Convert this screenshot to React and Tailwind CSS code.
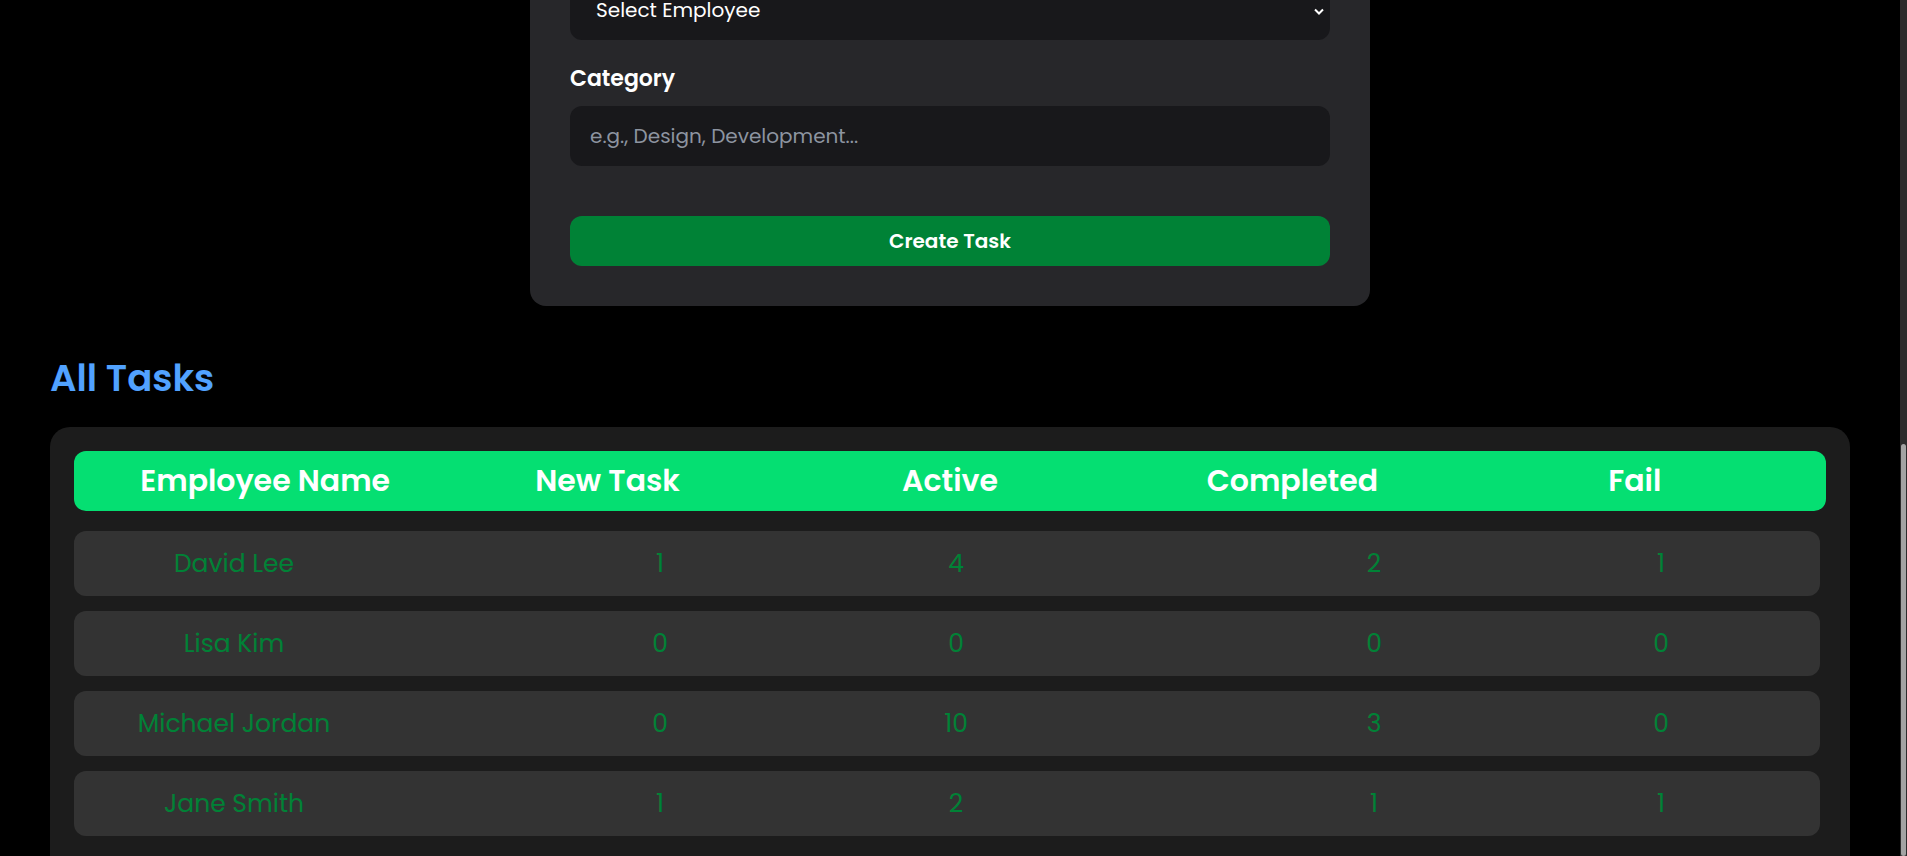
import { useState } from "react";

const employees = [
  { name: "David Lee", newTask: 1, active: 4, completed: 2, failed: 1 },
  { name: "Lisa Kim", newTask: 0, active: 0, completed: 0, failed: 0 },
  { name: "Michael Jordan", newTask: 0, active: 10, completed: 3, failed: 0 },
  { name: "Jane Smith", newTask: 1, active: 2, completed: 1, failed: 1 },
];

const headers = ["Employee Name", "New Task", "Active", "Completed", "Fail"];

const CreateTask = () => {
  const [assignTo, setAssignTo] = useState("");
  const [category, setCategory] = useState("");

  const submitHandler = (e) => {
    e.preventDefault();
    setCategory("");
  };

  return (
    <form
      onSubmit={submitHandler}
      className="mx-auto -mt-[60px] w-[840px] rounded-2xl bg-[#27272a] p-10"
    >
      <div className="relative">
        <select
          value={assignTo}
          onChange={(e) => setAssignTo(e.target.value)}
          className="h-[60px] w-full appearance-none rounded-xl bg-[#18181b] pl-[26px] pr-10 text-xl text-white outline-none"
        >
          <option value="">Select Employee</option>
          {employees.map((emp) => (
            <option key={emp.name} value={emp.name}>
              {emp.name}
            </option>
          ))}
        </select>
        {/* native arrow replaced so it sits where the browser drew it */}
        <svg
          className="pointer-events-none absolute right-[6px] top-[28px] h-[7px] w-[10px]"
          viewBox="0 0 10 7"
          fill="none"
          stroke="white"
          strokeWidth="2"
        >
          <path d="M1 1.5l4 4 4-4" />
        </svg>
      </div>

      <label className="mt-[25px] mb-[13px] block text-[22px] leading-7 font-semibold text-white">
        Category
      </label>
      <input
        value={category}
        onChange={(e) => setCategory(e.target.value)}
        type="text"
        placeholder="e.g., Design, Development..."
        className="h-[60px] w-full rounded-xl bg-[#18181b] px-5 text-xl text-white outline-none placeholder:text-[#8d94a0]"
      />

      <button className="mt-[50px] h-[50px] w-full rounded-xl bg-green-700 text-xl font-semibold text-white">
        Create Task
      </button>
    </form>
  );
};

// row cells don't line up with the header grid, so each column keeps its own offset
const rowCols = [
  "ml-[40px] w-[240px]",
  "ml-[246px] w-[120px]",
  "ml-[176px] w-[120px]",
  "ml-[298px] w-[120px]",
  "ml-[167px] w-[120px]",
];

const AllTask = () => {
  return (
    <div className="mt-[29px] rounded-[20px] bg-[#1c1c1c] px-6 pt-[24px] pb-10">
      <div className="grid h-[60px] grid-cols-5 items-center rounded-xl bg-green-400 px-5">
        {headers.map((h) => (
          <h2 key={h} className="text-center text-3xl font-semibold text-white">
            {h}
          </h2>
        ))}
      </div>

      <div className="mt-5 mr-[6px] flex flex-col gap-[15px]">
        {employees.map((emp) => {
          const values = [emp.name, emp.newTask, emp.active, emp.completed, emp.failed];
          return (
            <div
              key={emp.name}
              className="flex h-[65px] items-center rounded-xl bg-[#333333]"
            >
              {values.map((v, i) => (
                <span
                  key={i}
                  className={`${rowCols[i]} shrink-0 text-center text-[25px] font-normal text-green-700`}
                >
                  {v}
                </span>
              ))}
            </div>
          );
        })}
      </div>
    </div>
  );
};

const App = () => {
  return (
    <div className="flex h-screen overflow-hidden bg-black font-[Poppins,Inter,sans-serif]">
      <main className="min-w-0 flex-1 px-[50px]">
        <CreateTask />
        <h1 className="mt-[52px] text-[37px] leading-10 font-semibold text-blue-400">
          All Tasks
        </h1>
        <AllTask />
      </main>
      <div className="flex w-[7px] flex-col bg-[#2c2c2c]">
        <div className="h-[444px]" />
        <div className="mx-[1px] flex-1 rounded-full bg-[#a3a3a3]" />
      </div>
    </div>
  );
};

export default App;
